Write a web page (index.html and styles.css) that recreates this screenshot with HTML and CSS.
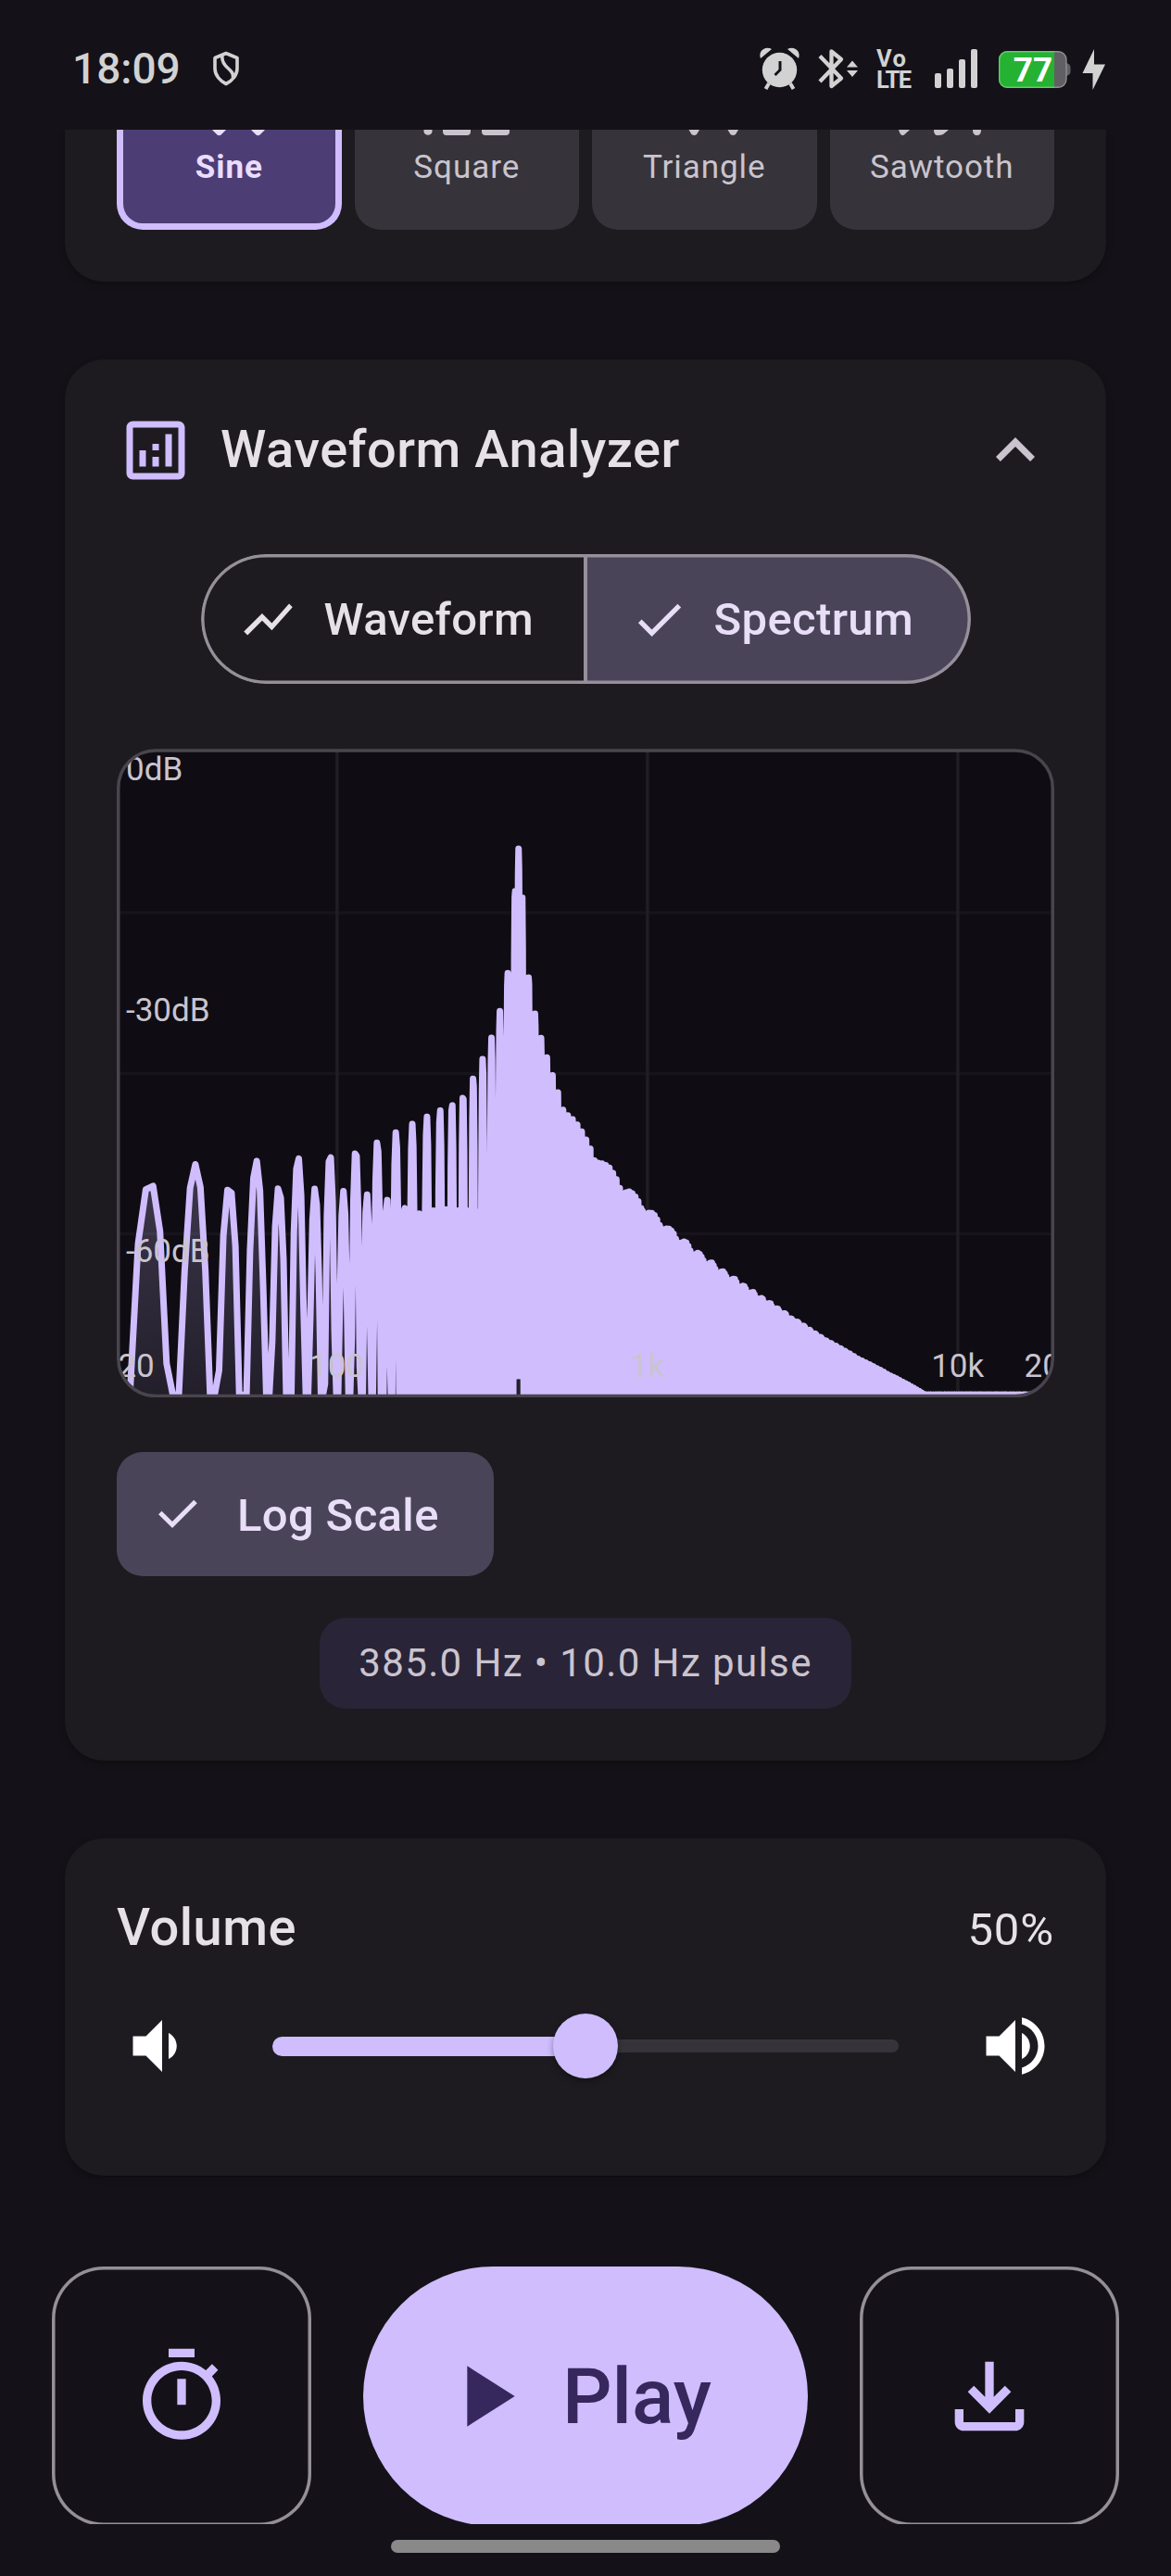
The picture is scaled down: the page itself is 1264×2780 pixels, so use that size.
FILE: index.html
```html
<!DOCTYPE html>
<html lang="en">
<head>
<meta charset="utf-8">
<title>Waveform Analyzer</title>
<link rel="stylesheet" href="styles.css">
</head>
<body>
<div class="screen">
  <header class="status">
    <div class="status-left">
      <span class="clock">18:09</span>
      <svg class="shield" viewBox="0 0 30 38" width="30" height="38"><path d="M15 2.500 27 7.500V19C27 26 21.500 32.500 15 35.500 8.500 32.500 3 26 3 19V7.500Z M11 5C10 11 13 15 17 18.500S24 25 22 29" fill="none" stroke="#d2d2d2" stroke-width="3.600" stroke-linejoin="round"/></svg>
    </div>
    <svg class="status-icons" viewBox="816 48 382 52" width="382" height="52">
      <g fill="#d2d2d2">
        <circle cx="841.500" cy="75.500" r="18.700"/>
        <path d="M830 90l-3.500 6M853 90l3.500 6" stroke="#d2d2d2" stroke-width="4"/>
        <path d="M821 63C818 55 826 49 833 53ZM862 63C865 55 857 49 850 53Z"/>
        <path d="M842 66V75.500L836.500 81" fill="none" stroke="#141218" stroke-width="3"/>
        <path d="M885 60.500 908 84.500 897.500 93V55.500L908 64 885 88" fill="none" stroke="#d2d2d2" stroke-width="4.300" stroke-linejoin="round"/>
        <path d="M914 72.500 920 65.500 926 72.500ZM914 76 920 83 926 76Z"/>
        <rect x="1009" y="79" width="7" height="16" rx="2"/>
        <rect x="1022" y="74" width="7" height="21" rx="2"/>
        <rect x="1035" y="64" width="7" height="31" rx="2"/>
        <rect x="1048" y="53" width="7" height="42" rx="2"/>
        <path d="M1181 53 1168.500 79H1179.500V97L1193 69.500H1181Z"/>
      </g>
      <text x="946" y="72" class="volte" textLength="32">Vo</text>
      <text x="946" y="95.300" class="volte" textLength="38">LTE</text>
      <rect x="1078" y="55" width="73.500" height="40" rx="9" fill="#606064"/>
      <path d="M1151 68c3 1 4.500 2 4.500 5v4c0 3-1.500 4-4.500 5z" fill="#606064"/>
      <path d="M1138 55H1087a9 9 0 0 0-9 9V86a9 9 0 0 0 9 9H1138Z" fill="#25b232"/>
      <rect x="1078.700" y="55.700" width="72.300" height="38.600" rx="8.500" fill="none" stroke="#fff" stroke-opacity=".3" stroke-width="1.400"/>
      <text x="1115" y="88" class="battery" text-anchor="middle">77</text>
    </svg>
  </header>

  <main class="content">
    <section class="card card-shapes">
      <div class="tile selected">
        <svg viewBox="-64 0 128 7" width="128" height="7"><path d="M-18 0H-3L-8.500 5.400Q-10.500 7-12.500 5.400ZM24 0H39L33.500 5.400Q31.500 7 29.500 5.400Z" fill="#e9ddff"/></svg>
        <span>Sine</span>
      </div>
      <div class="tile">
        <svg viewBox="-64 0 128 7" width="128" height="7"><path d="M-46.500 0H-37.500V2C-38 7-46 7-46.500 2ZM-26 0H4V2Q4 6 0 6H-22Q-26 6-26 2ZM16 0H46V2Q46 6 42 6H20Q16 6 16 2Z" fill="#cac4cf"/></svg>
        <span>Square</span>
      </div>
      <div class="tile">
        <svg viewBox="-64 0 128 7" width="128" height="7"><path d="M-16.500 0H-5L-8 5Q-10.700 7-13.500 5ZM25.500 0H37L34 5Q31.300 7 28.500 5Z" fill="#cac4cf"/></svg>
        <span>Triangle</span>
      </div>
      <div class="tile">
        <svg viewBox="-64 0 128 7" width="128" height="7"><path d="M-47 0H-35L-41 5.500Q-44 7-45.500 4ZM-9 0H7L1 5Q-1 6-5 6-9 6-9 0ZM33 0H42Q42 6 37.500 6T33 0Z" fill="#cac4cf"/></svg>
        <span>Sawtooth</span>
      </div>
    </section>

    <section class="card card-analyzer">
      <div class="card-head">
        <svg class="icon24 primary" viewBox="0 0 24 24"><path d="M19 3H5c-1.100 0-2 .9-2 2v14c0 1.100.9 2 2 2h14c1.100 0 2-.9 2-2V5c0-1.100-.9-2-2-2zm0 16H5V5h14v14zM7 12h2v5H7zM15 7h2v10h-2zM11 14h2v3h-2zM11 10h2v2h-2z"/></svg>
        <h2>Waveform Analyzer</h2>
        <svg class="icon24 muted" viewBox="0 0 24 24"><path d="M12 8l-6 6 1.410 1.410L12 10.830l4.590 4.580L18 14z"/></svg>
      </div>

      <div class="segments">
        <div class="segment">
          <svg class="icon18" viewBox="0 0 24 24"><path d="M3.500 18.490l6-6.010 4 4L22 6.920l-1.410-1.410-7.090 7.970-4-4L2 16.990z"/></svg>
          <span>Waveform</span>
        </div>
        <div class="segment active">
          <svg class="icon18" viewBox="0 0 24 24"><path d="M9 16.170L4.830 12l-1.420 1.410L9 19 21 7l-1.410-1.410z"/></svg>
          <span>Spectrum</span>
        </div>
      </div>

      <svg class="chart" viewBox="126 808 1012 700" width="1012" height="700">
        <defs>
          <clipPath id="plot"><rect x="128.500" y="810.750" width="1007" height="695" rx="39.500"/></clipPath>
          <linearGradient id="area" gradientUnits="userSpaceOnUse" x1="0" y1="812" x2="0" y2="1505">
            <stop offset="0" stop-color="#cfbdfe" stop-opacity=".5"/>
            <stop offset="1" stop-color="#cfbdfe" stop-opacity=".1"/>
          </linearGradient>
        </defs>
        <rect x="127.750" y="810" width="1008.500" height="696.500" rx="40.250" fill="#0f0d13"/>
        <g clip-path="url(#plot)">
          <path d="M129 985H1135M129 1158.400H1135M129 1331.600H1135" stroke="#17151b" stroke-width="3.500"/>
          <path d="M363.900 811V1505M698.900 811V1505M1033.900 811V1505" stroke="#201e24" stroke-width="3.500"/>
          <path id="spectrum-area" fill="url(#area)"/>
          <path id="spectrum-line" fill="none" stroke="#cfbdfe" stroke-width="7" stroke-linejoin="round"/>
          <g class="axis">
            <text x="136" y="842.300">0dB</text>
            <text x="136" y="1102.400">-30dB</text>
            <text x="136" y="1362.300">-60dB</text>
            <text x="127.400" y="1486.300">20</text>
            <text x="363.700" y="1486.300" text-anchor="middle">100</text>
            <text x="698.700" y="1486.300" text-anchor="middle">1k</text>
            <text x="1033.700" y="1486.300" text-anchor="middle">10k</text>
            <text x="1105.500" y="1486.300">20k</text>
          </g>
        </g>
        <rect x="127.750" y="810" width="1008.500" height="696.500" rx="40.250" fill="none" stroke="#49454e" stroke-width="3.500"/>
      </svg>

      <div class="chip">
        <svg viewBox="0 0 48 40" width="48" height="40"><path d="M4.800 18.500 18 31.500 43 6.500" fill="none" stroke="#e8def8" stroke-width="5"/></svg>
        <span>Log Scale</span>
      </div>

      <div class="readout">385.0 Hz • 10.0 Hz pulse</div>
    </section>

    <section class="card card-volume">
      <div class="volume-head"><h2>Volume</h2><span>50%</span></div>
      <div class="volume-row">
        <svg class="icon24 white" viewBox="0 0 24 24"><path d="M18.500 12c0-1.770-1.020-3.290-2.500-4.030v8.050c1.480-.73 2.500-2.250 2.500-4.020zM5 9v6h4l5 5V4L9 9H5z"/></svg>
        <div class="slider"><div class="track-on"></div><div class="thumb"></div><div class="track-off"></div></div>
        <svg class="icon24 white" viewBox="0 0 24 24"><path d="M3 9v6h4l5 5V4L7 9H3zm13.500 3c0-1.770-1.020-3.290-2.500-4.030v8.050c1.480-.73 2.500-2.250 2.500-4.020zM14 3.230v2.060c2.890.86 5 3.540 5 6.710s-2.110 5.850-5 6.710v2.060c4.010-.91 7-4.490 7-8.770s-2.990-7.860-7-8.770z"/></svg>
      </div>
    </section>
  </main>

  <footer class="actions">
    <div class="square-btn"><svg class="icon32 primary" viewBox="0 0 24 24"><path d="M9 1h6v2H9zM19.030 7.390l1.420-1.420c-.43-.51-.9-.99-1.410-1.410l-1.420 1.420C16.070 4.740 14.120 4 12 4c-4.970 0-9 4.030-9 9s4.020 9 9 9 9-4.030 9-9c0-2.120-.74-4.070-1.970-5.610zM12 20c-3.870 0-7-3.130-7-7s3.130-7 7-7 7 3.130 7 7-3.130 7-7 7zM11 8h2v6h-2z"/></svg></div>
    <div class="play-btn"><svg class="icon32" viewBox="0 0 24 24"><path d="M8 5v14l11-7z"/></svg><span>Play</span></div>
    <div class="square-btn"><svg class="icon32 primary" viewBox="0 0 24 24"><path d="M18 15v3H6v-3H4v3c0 1.100.9 2 2 2h12c1.100 0 2-.9 2-2v-3h-2zm-1-4l-1.410-1.410L13 12.170V4h-2v8.170L8.410 9.590 7 11l5 5 5-5z"/></svg></div>
  </footer>
  <div class="nav-handle"></div>
</div>
<script src="spectrum.js"></script>
</body>
</html>
```
FILE: styles.css
```css
* { box-sizing: border-box; }

body {
  margin: 0;
  background: #141218;
  color: #e6e1e6;
  font-family: Roboto, "Liberation Sans", sans-serif;
}

svg { display: block; flex: none; }

h2 {
  margin: 0;
  font-size: 56px;
  font-weight: 500;
  line-height: 80px;
  letter-spacing: .525px;
}

.screen {
  width: 1264px;
  height: 2780px;
  overflow: hidden;
  background: #141218;
}

.status {
  height: 140px;
  padding: 0 66px 0 78px;
  display: flex;
  justify-content: space-between;
  align-items: flex-start;
}

.status-left { display: flex; padding-top: 44px; gap: 34px; }
.clock { font-size: 46px; font-weight: 500; line-height: 60px; width: 117px; color: #d2d2d2; }
.shield { margin-top: 11px; }
.status-icons { margin-top: 48px; }
.volte { font-size: 25.500px; font-weight: 700; fill: #d2d2d2; }
.battery { font-size: 37px; font-weight: 700; fill: #fff; }

.content {
  padding: 0 70px;
  display: flex;
  flex-direction: column;
  gap: 84px;
}

.card {
  background: #1d1b20;
  border-radius: 42px;
  box-shadow: 0 3px 7px rgba(0, 0, 0, .3);
}

.card-shapes {
  height: 164px;
  padding: 0 56px 56px;
  border-radius: 0 0 42px 42px;
  clip-path: inset(0 -20px -20px);
  display: grid;
  grid-template-columns: repeat(4, minmax(0, 1fr));
  gap: 14px;
}

.tile {
  height: 108px;
  border-radius: 0 0 28px 28px;
  background: #36343a;
  color: #cac4cf;
  display: flex;
  flex-direction: column;
  align-items: center;
  gap: 12px;
  font-size: 35px;
  line-height: 44px;
  letter-spacing: .950px;
}

.tile.selected {
  background: #4d3d75;
  border: solid #cfbdfe;
  border-width: 0 7px 7px;
  color: #e9ddff;
  font-weight: 700;
}

.card-analyzer { height: 1512px; padding: 56px; display: flex; flex-direction: column; }

.card-head { height: 84px; display: flex; align-items: center; gap: 28px; }
.card-head h2 { flex: 1; padding-bottom: 2px; }

.icon24 { width: 84px; height: 84px; }
.icon18 { width: 63px; height: 63px; fill: currentColor; }
.icon32 { width: 112px; height: 112px; fill: currentColor; }
.primary { fill: #cfbdfe; }
.muted { fill: #cac4cf; }
.white { fill: #fff; }

.segments {
  position: relative;
  width: 831px;
  height: 140px;
  margin: 70px auto 0;
  display: flex;
  border-radius: 70px;
  overflow: hidden;
}

.segments::after {
  content: "";
  position: absolute;
  inset: 0;
  border-radius: 70px;
  box-shadow: inset 0 0 0 3.500px #948f99;
}

.segment {
  flex: 1;
  padding-right: 14px;
  display: flex;
  align-items: center;
  justify-content: center;
  gap: 28px;
  font-size: 49px;
  font-weight: 500;
  letter-spacing: .35px;
}

.segment.active {
  background: #4a4458;
  color: #e8def8;
  box-shadow: inset 2px 0 #948f99, -2px 0 #948f99;
}

.chart { margin-top: 70px; }

.axis text { font-size: 35px; fill: #cac4cf; }

.chip {
  width: 407px;
  height: 134px;
  margin-top: 59px;
  padding: 0 0 1px 42px;
  border-radius: 28px;
  background: #4a4458;
  color: #e8def8;
  display: flex;
  align-items: center;
  gap: 40px;
  font-size: 49px;
  font-weight: 500;
  letter-spacing: .35px;
}

.chip span { padding-top: 3px; }

.readout {
  align-self: center;
  width: 574px;
  height: 98px;
  margin-top: 45px;
  border-radius: 28px;
  background: #2a2438;
  color: #cac4cf;
  font-size: 42px;
  line-height: 98px;
  letter-spacing: 1.400px;
  text-align: center;
}

.card-volume { height: 364px; padding: 56px; }
.volume-head { height: 84px; display: flex; justify-content: space-between; }
.volume-head span { font-size: 49px; line-height: 86px; letter-spacing: .875px; }
.volume-row { margin-top: 42px; display: flex; align-items: center; gap: 84px; }
.slider { flex: 1; height: 84px; display: flex; align-items: center; }
.track-on { width: 318px; height: 21px; margin-right: -15px; border-radius: 10.500px 0 0 10.500px; background: #cfbdfe; }
.thumb { position: relative; width: 70px; height: 70px; border-radius: 50%; background: #cfbdfe; box-shadow: 0 3px 7px rgba(0, 0, 0, .35); }
.track-off { flex: 1; height: 14px; border-radius: 0 7px 7px 0; background: #36343a; }

.actions {
  height: 278px;
  margin-top: 98px;
  padding: 0 56px;
  overflow: hidden;
  display: flex;
  align-items: flex-start;
  gap: 56px;
}

.square-btn {
  width: 280px;
  height: 280px;
  border-radius: 56px;
  box-shadow: inset 0 0 0 3.500px #948f99;
  display: flex;
  align-items: center;
  justify-content: center;
}

.play-btn {
  flex: 1;
  height: 280px;
  padding-left: 75px;
  border-radius: 140px;
  background: #cfbdfe;
  color: #36275d;
  display: flex;
  align-items: center;
  gap: 28px;
  font-size: 84px;
  font-weight: 500;
}

.nav-handle {
  width: 420px;
  height: 14px;
  margin: 17px auto 0;
  border-radius: 7px;
  background: #89898a;
}
```
FILE: spectrum.js
```js
// Spectrum of a 385 Hz sine gated at 10 Hz: one window lobe per sideband.
const FLOOR = 1505.2;
const PX_PER_DB = 693 / 80;
const BIN = 44100 / 32768;
const LOBE = 1.9;

const xOf = f => 129.5 + 335 * Math.log10(f / 20);
const fOf = x => 20 * Math.pow(10, (x - 129.5) / 335);

// Crest heights of the strong sidebands (385 Hz +/- odd multiples of 10 Hz).
const strong = [
  [35, 1253], [55, 1249], [75, 1245], [95, 1241.5], [115, 1236.5], [135, 1227.5], [155, 1218],
  [175, 1209.5], [195, 1201.5], [215, 1193.5], [235, 1185.8], [255, 1176], [275, 1158], [295, 1138.5],
  [315, 1116.5], [335, 1087.5], [355, 1045.5], [375, 955], [385, 912.3], [395, 959], [415, 1048.3],
  [435, 1089.3], [455, 1116.7], [475, 1137.7], [495, 1156], [515, 1172.7], [535, 1188.7],
  [555, 1196.7], [575, 1203], [595, 1210], [615, 1217.7], [635, 1225.7], [655, 1234], [675, 1244]
];
// Higher up the crests merge into a scalloped slope, given as x, y.
[[649, 1250], [652, 1252], [658, 1257], [663, 1264], [667, 1270], [671, 1279], [674, 1281], [680, 1282],
 [688, 1290], [694, 1300], [698, 1304], [705, 1306], [711, 1314], [715.5, 1321], [721, 1321.5],
 [727, 1327], [733, 1336], [740, 1336.5], [748, 1348], [754, 1348.5], [762.5, 1359], [768, 1358.8],
 [775, 1368.3], [780, 1368.2], [787, 1376.6], [793, 1376.6], [798, 1384], [803, 1384.1],
 [808.5, 1391.2], [813, 1390.9], [818, 1397.6], [823, 1397.5], [826.7, 1403], [832, 1403],
 [835.7, 1408.6], [840, 1408.7], [843.7, 1413.7], [848, 1413.8], [851.5, 1418.3],
 [860, 1422.6], [877, 1434], [893.3, 1444.3], [926.7, 1463.3], [960, 1480.6], [998.3, 1501.5],
 [1140, 1501.7]].forEach(([x, y]) => strong.push([fOf(x), y]));

const weak = [[25, 1272], [45, 1276], [65, 1277], [85, 1279], [105, 1282], [125, 1285.5],
  [145, 1290], [165, 1296.5], [185, 1301], [205, 1300.5], [225, 1301], [245, 1303], [20000, 1303]];

function crest(table, f) {
  if (f <= table[0][0]) return table[0][1];
  for (let i = 1; i < table.length; i++) {
    const [f1, y1] = table[i], [f0, y0] = table[i - 1];
    if (f <= f1) return y0 + (y1 - y0) * (f - f0) / (f1 - f0);
  }
  return table[table.length - 1][1];
}

function lobeDb(df) {
  const u = Math.abs(df) / LOBE;
  if (u < 1e-6) return 0;
  if (Math.abs(u - 1) < 1e-3) return 6.02;
  if (u >= 2) return 200;
  return -20 * Math.log10(Math.abs(Math.sin(Math.PI * u) / (Math.PI * u) / (1 - u * u)));
}

const points = [];
for (let n = 15; n * BIN < 20000; n++) {
  const f = n * BIN;
  // The valleys beside the carrier stay just above the floor.
  let y = f > 373 && f < 397 ? 1485 : FLOOR;
  const k = Math.round((f - 5) / 10);
  for (let j = k - 1; j <= k + 1; j++) {
    const fk = 5 + 10 * j;
    if (fk < 20) continue;
    const isStrong = j % 2 === 1 || fk === 385;
    const env = crest(strong, fk);
    const top = isStrong ? env : Math.max(crest(weak, fk), env + 4);
    y = Math.min(y, top + 3.5 + lobeDb(f - fk) * PX_PER_DB);
  }
  points.push(xOf(f).toFixed(2) + ' ' + y.toFixed(2));
}

const line = 'M' + points.join('L');
document.getElementById('spectrum-line').setAttribute('d', line);
document.getElementById('spectrum-area').setAttribute('d', line + 'V1506H130.6Z');
```
